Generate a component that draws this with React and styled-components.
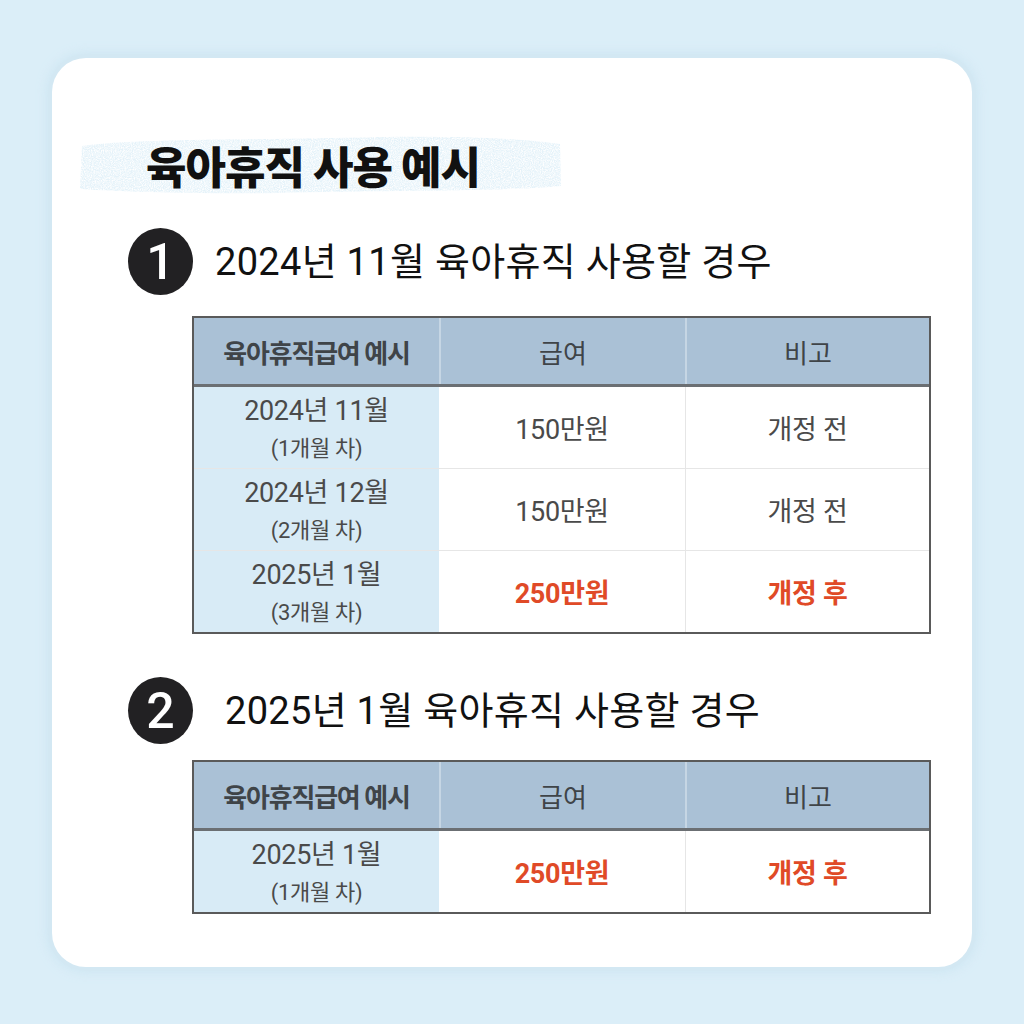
import React from "react";
import styled, { createGlobalStyle } from "styled-components";

const GlobalStyle = createGlobalStyle`
  html, body {
    margin: 0;
    padding: 0;
    background: #dbeef8;
  }
  body {
    font-family: "Roboto", "Noto Sans CJK KR", sans-serif;
  }
`;

const cases = [
  {
    no: 1,
    title: "2024년 11월 육아휴직 사용할 경우",
    rows: [
      { month: "2024년 11월", nth: "(1개월 차)", pay: "150만원", note: "개정 전" },
      { month: "2024년 12월", nth: "(2개월 차)", pay: "150만원", note: "개정 전" },
      { month: "2025년 1월", nth: "(3개월 차)", pay: "250만원", note: "개정 후", hot: true },
    ],
  },
  {
    no: 2,
    title: "2025년 1월 육아휴직 사용할 경우",
    rows: [{ month: "2025년 1월", nth: "(1개월 차)", pay: "250만원", note: "개정 후", hot: true }],
  },
];

const Brush = () => (
  <BrushSvg viewBox="0 0 484 62" preserveAspectRatio="none">
    <defs>
      <filter id="grain" x="-5%" y="-20%" width="110%" height="140%">
        <feTurbulence type="fractalNoise" baseFrequency="0.9" numOctaves="2" seed="4" result="n" />
        <feColorMatrix
          in="n"
          type="matrix"
          values="0 0 0 0 0.78  0 0 0 0 0.89  0 0 0 0 0.95  0 0 0 -2.2 1.7"
          result="spots"
        />
        <feComposite in="spots" in2="SourceGraphic" operator="in" />
      </filter>
    </defs>
    <path
      d="M4 12 C60 4 200 6 300 3 C380 2 440 4 482 10 L483 52 C420 58 300 56 200 59 C120 60 50 58 2 55 Z"
      fill="#000"
      filter="url(#grain)"
    />
  </BrushSvg>
);

const App = () => {
  return (
    <>
      <GlobalStyle />
      <Page>
        <Card>
          <TitleWrap>
            <Brush />
            <Title>육아휴직 사용 예시</Title>
          </TitleWrap>

          {cases.map((c) => (
            <Section key={c.no} $no={c.no}>
              <CaseHead $no={c.no}>
                <Badge>{c.no}</Badge>
                <CaseTitle>{c.title}</CaseTitle>
              </CaseHead>
              <Table $no={c.no}>
                <HeadRow>
                  <HeadCell $strong>육아휴직급여 예시</HeadCell>
                  <HeadCell>급여</HeadCell>
                  <HeadCell>비고</HeadCell>
                </HeadRow>
                {c.rows.map((r, i) => (
                  <Row key={i}>
                    <MonthCell>
                      <Month>{r.month}</Month>
                      <Nth>{r.nth}</Nth>
                    </MonthCell>
                    <Cell $hot={r.hot}>{r.pay}</Cell>
                    <Cell $hot={r.hot}>{r.note}</Cell>
                  </Row>
                ))}
              </Table>
            </Section>
          ))}
        </Card>
      </Page>
    </>
  );
};

export default App;

const Page = styled.div`
  width: 1024px;
  height: 1024px;
  box-sizing: border-box;
  padding: 58px 52px 57px 52px;
  background: #dbeef8;
`;

const Card = styled.div`
  height: 100%;
  box-sizing: border-box;
  background: #fff;
  border-radius: 34px;
  box-shadow: 0 0 0 4px #d3e8f3, 0 0 10px 6px rgba(200, 226, 240, 0.6);
  padding: 76px 0 0 26px;
  display: flex;
  flex-direction: column;
`;

const TitleWrap = styled.div`
  position: relative;
  width: 484px;
  height: 62px;
  display: flex;
  align-items: center;
`;

const BrushSvg = styled.svg`
  position: absolute;
  inset: 0;
  width: 100%;
  height: 100%;
`;

const Title = styled.h1`
  position: relative;
  margin: 0 0 0 68px;
  font-family: "Noto Sans CJK KR", sans-serif;
  font-size: 44px;
  font-weight: 900;
  letter-spacing: -1px;
  color: #111;
  line-height: 1;
`;

const Section = styled.div`
  margin-top: ${(p) => (p.$no === 1 ? "32px" : "43px")};
  display: flex;
  flex-direction: column;
`;

const CaseHead = styled.div`
  display: flex;
  align-items: center;
  margin-left: 50px;
  gap: ${(p) => (p.$no === 1 ? "22px" : "32px")};
  height: 67px;
`;

const Badge = styled.div`
  width: 65px;
  height: 67px;
  border-radius: 50%;
  background: #222123;
  color: #fff;
  display: flex;
  align-items: center;
  justify-content: center;
  font-size: 50px;
  font-weight: 500;
  line-height: 1;
`;

const CaseTitle = styled.div`
  font-size: 38px;
  font-weight: 400;
  letter-spacing: 0.3px;
  color: #111;
  line-height: 1;
`;

const Table = styled.div`
  margin: ${(p) => (p.$no === 1 ? "21px" : "16px")} 0 0 114px;
  width: 739px;
  border: 2px solid #5a5a5a;
  box-sizing: border-box;
`;

const HeadRow = styled.div`
  display: grid;
  grid-template-columns: 245px 246px 1fr;
  height: 66px;
  background: #aac1d6;
  border-bottom: 3px solid #6b6f73;
`;

const HeadCell = styled.div`
  display: flex;
  align-items: center;
  justify-content: center;
  font-family: "Noto Sans CJK KR", sans-serif;
  font-size: 26px;
  font-weight: ${(p) => (p.$strong ? 700 : 400)};
  letter-spacing: ${(p) => (p.$strong ? "-1.2px" : "0")};
  color: #3f4448;
  & + & {
    border-left: 2px solid #c6d6e4;
  }
`;

const Row = styled.div`
  display: grid;
  grid-template-columns: 245px 246px 1fr;
  height: 81px;
  & + & {
    border-top: 1px solid #e6e6e6;
  }
`;

const MonthCell = styled.div`
  background: #d8ebf6;
  display: flex;
  flex-direction: column;
  align-items: center;
  justify-content: center;
  padding-top: 4px;
  color: #4a4a4a;
`;

const Month = styled.div`
  font-size: 27px;
  line-height: 38px;
  letter-spacing: -0.3px;
`;

const Nth = styled.div`
  font-size: 22px;
  line-height: 38px;
  letter-spacing: -0.3px;
`;

const Cell = styled.div`
  display: flex;
  align-items: center;
  justify-content: center;
  font-size: 27px;
  letter-spacing: -0.3px;
  font-weight: ${(p) => (p.$hot ? 700 : 400)};
  color: ${(p) => (p.$hot ? "#e04a27" : "#4a4a4a")};
  & + & {
    border-left: 1px solid #e6e6e6;
  }
`;
